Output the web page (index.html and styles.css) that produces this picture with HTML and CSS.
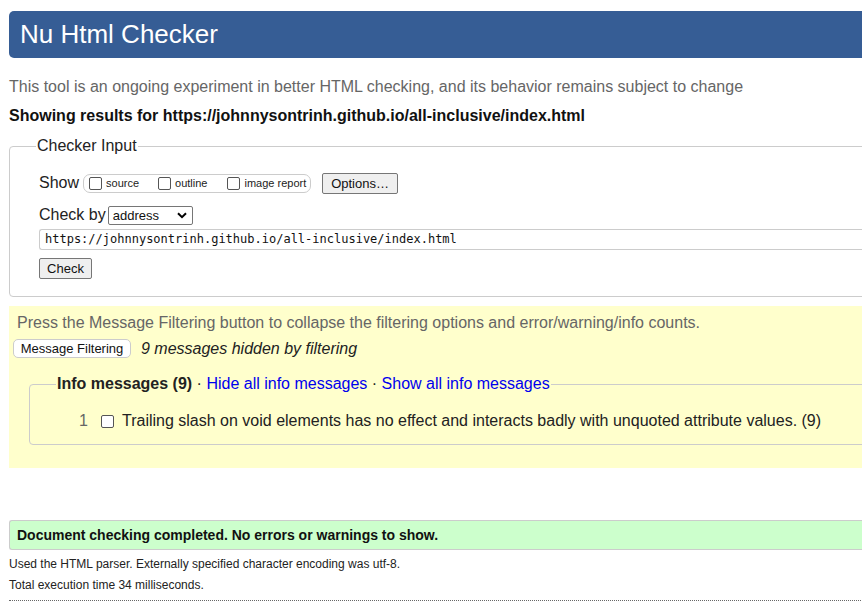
FILE: index.html
```html
<!DOCTYPE html>
<html>
<head>
<meta charset="utf-8">
<title>Nu Html Checker</title>
<link rel="stylesheet" href="styles.css">
</head>
<body>
<div class="page">
  <h1 class="header">Nu Html Checker</h1>
  <p class="intro">This tool is an ongoing experiment in better HTML checking, and its behavior remains subject to change</p>
  <p class="showing">Showing results for https://johnnysontrinh.github.io/all-inclusive/index.html</p>

  <fieldset class="checker">
    <legend class="checker-legend">Checker Input</legend>
    <div class="row show-row">
      <span class="label">Show</span>
      <span class="show-group">
        <label class="opt"><span class="cb"></span>source</label>
        <label class="opt"><span class="cb"></span>outline</label>
        <label class="opt"><span class="cb"></span>image report</label>
      </span>
      <span class="btn options-btn">Options…</span>
    </div>
    <div class="row checkby-row">
      <span class="label">Check by</span>
      <span class="select">address
        <svg class="chev" width="10" height="7" viewBox="0 0 10 7"><path d="M1 1.2 L5 5.2 L9 1.2" fill="none" stroke="#000" stroke-width="2"/></svg>
      </span>
    </div>
    <div class="url">https://johnnysontrinh.github.io/all-inclusive/index.html</div>
    <span class="btn check-btn">Check</span>
  </fieldset>

  <div class="filters">
    <p class="filter-note">Press the Message Filtering button to collapse the filtering options and error/warning/info counts.</p>
    <div class="filter-row">
      <span class="btn filter-btn">Message Filtering</span>
      <em class="hidden-count">9 messages hidden by filtering</em>
    </div>
    <fieldset class="info">
      <legend class="info-legend"><strong>Info messages (9)</strong> · <a class="lnk">Hide all info messages</a> · <a class="lnk">Show all info messages</a></legend>
      <div class="msg">
        <span class="num">1</span>
        <span class="cb msg-cb"></span>
        <span class="msg-text">Trailing slash on void elements has no effect and interacts badly with unquoted attribute values. (9)</span>
      </div>
    </fieldset>
  </div>

  <p class="success">Document checking completed. No errors or warnings to show.</p>
  <p class="details">Used the HTML parser. Externally specified character encoding was utf-8.</p>
  <p class="details">Total execution time 34 milliseconds.</p>
  <hr class="rule">
</div>
</body>
</html>
```
FILE: styles.css
```css
html, body {
  margin: 0;
  padding: 0;
  overflow: hidden;
  background: #fff;
}
body {
  font-family: "Liberation Sans", Arial, sans-serif;
  color: #222;
  font-size: 16px;
}
.page {
  width: 900px;
  padding: 11px 0 0 9px;
}
.header {
  margin: 0;
  height: 47px;
  background: #365d95;
  color: #fff;
  font-weight: normal;
  font-size: 26px;
  line-height: 47px;
  padding-left: 11px;
  border-radius: 5px 0 0 5px;
}
.intro {
  margin: 19px 0 0 0;
  color: #666;
  font-size: 16px;
  line-height: 19px;
}
.showing {
  margin: 10px 0 0 0;
  font-weight: bold;
  color: #111;
  font-size: 16px;
  line-height: 19px;
}
.checker {
  margin: 12px 0 0 0;
  border: 1px solid #ccc;
  border-radius: 4px;
  padding: 9px 0 17px 29px;
}
.checker-legend {
  padding: 0 1px;
  margin-left: -3px;
  font-size: 16px;
  color: #222;
}
.row {
  display: flex;
  align-items: center;
}
.label {
  font-size: 16px;
}
.show-row {
  height: 20px;
  margin-top: 9px;
}
.show-group {
  display: inline-flex;
  align-items: center;
  margin-left: 4px;
  border: 1px solid #ccc;
  border-radius: 7px;
  height: 19px;
  width: 228px;
  padding-left: 5px;
  box-sizing: border-box;
  font-size: 11px;
}
.opt {
  display: inline-flex;
  align-items: center;
  color: #222;
}
.opt + .opt { margin-left: 19px; }
.opt:last-child { margin-left: 20px; }
.cb {
  display: inline-block;
  box-sizing: border-box;
  width: 13px;
  height: 13px;
  border: 1px solid #555;
  border-radius: 2px;
  background: #fff;
  margin-right: 4px;
}
.btn {
  display: inline-flex;
  align-items: center;
  justify-content: center;
  box-sizing: border-box;
  border: 1px solid #767676;
  border-radius: 2px;
  background: #efefef;
  color: #111;
  font-size: 13px;
}
.options-btn {
  margin-left: 11px;
  width: 76px;
  height: 21px;
}
.checkby-row {
  margin-top: 12px;
  height: 20px;
}
.select {
  display: inline-flex;
  align-items: center;
  justify-content: space-between;
  box-sizing: border-box;
  margin-left: 2px;
  width: 85px;
  height: 19px;
  border: 1px solid #767676;
  border-radius: 2px;
  padding: 0 5px 0 4px;
  font-size: 13px;
  color: #111;
}
.chev { display: block; }
.url {
  margin-top: 4px;
  box-sizing: border-box;
  height: 21px;
  border: 1px solid #ccc;
  border-right: 0;
  border-radius: 3px 0 0 3px;
  padding-left: 5px;
  font-family: "DejaVu Sans Mono", "Liberation Mono", monospace;
  font-size: 12px;
  line-height: 19px;
  color: #111;
}
.check-btn {
  margin-top: 8px;
  width: 53px;
  height: 21px;
}
.filters {
  margin-top: 9px;
  background: #ffc;
  padding: 8px 0 23px 4px;
}
.filter-note {
  margin: 0 0 0 4px;
  color: #666;
  font-size: 16px;
  line-height: 18px;
}
.filter-row {
  display: flex;
  align-items: center;
  margin-top: 7px;
}
.filter-btn {
  width: 118px;
  height: 19px;
  border: 1px solid #ccc;
  border-radius: 5px;
  background: #fff;
  font-size: 13px;
}
.hidden-count {
  margin-left: 10px;
  font-size: 16px;
  color: #222;
}
.info {
  margin: 17px 0 0 16px;
  border: 1px solid #ccc;
  border-radius: 4px;
  padding: 19px 0 14px 0;
}
.info-legend {
  margin-left: 26px;
  padding: 0 1px;
  font-size: 16px;
  color: #222;
}
.lnk { color: #00e; }
.msg {
  display: flex;
  align-items: center;
  margin-left: 49px;
}
.num { color: #666; width: 22px; font-size: 16px; }
.msg-cb { margin-right: 8px; }
.msg-text { font-size: 16px; color: #222; }
.success {
  margin: 52px 0 0 0;
  box-sizing: border-box;
  height: 30px;
  background: #cfc;
  border: 1px solid #ccc;
  border-right: 0;
  border-radius: 3px 0 0 3px;
  padding-left: 7px;
  font-size: 14px;
  font-weight: bold;
  line-height: 28px;
  color: #111;
}
.details {
  margin: 6px 0 0 0;
  font-size: 12px;
  line-height: 15px;
  color: #222;
}
.details + .details { margin-top: 6px; }
.success + .details { margin-top: 7px; }
.rule {
  margin: 7px 0 0 0;
  border: 0;
  border-top: 1px dotted #666;
}
```
